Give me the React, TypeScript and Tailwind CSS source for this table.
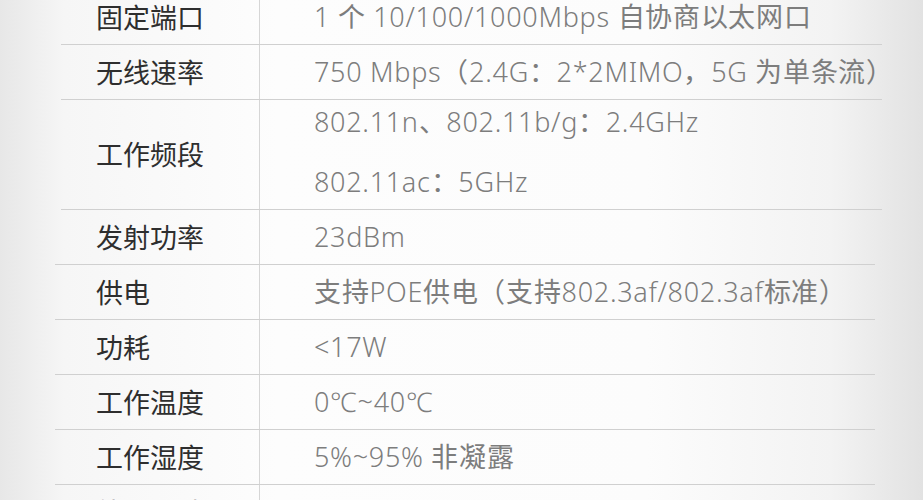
const specs: { label: string; values: string[]; left: number; right: number }[] = [
  { label: '固定端口', values: ['1 个 10/100/1000Mbps 自协商以太网口'], left: 61, right: 882 },
  { label: '无线速率', values: ['750 Mbps（2.4G：2*2MIMO，5G 为单条流）'], left: 61, right: 882 },
  { label: '工作频段', values: ['802.11n、802.11b/g：2.4GHz', '802.11ac：5GHz'], left: 61, right: 882 },
  { label: '发射功率', values: ['23dBm'], left: 55, right: 875 },
  { label: '供电', values: ['支持POE供电（支持802.3af/802.3af标准）'], left: 55, right: 875 },
  { label: '功耗', values: ['<17W'], left: 55, right: 875 },
  { label: '工作温度', values: ['0℃~40℃'], left: 55, right: 875 },
  { label: '工作湿度', values: ['5%~95% 非凝露'], left: 55, right: 875 },
  { label: '外形尺寸', values: [''], left: 55, right: 875 },
]

export default function App() {
  return (
    <div
      lang="zh-CN"
      className="w-[923px] h-[500px] overflow-hidden bg-[linear-gradient(to_right,#e7e7e7_0%,#f6f6f6_7%,#fdfdfd_30%,#fcfcfc_70%,#f3f3f3_90%,#e2e2e2_100%)]"
    >
      <div className="mt-[-10px]">
        {specs.map((s) => (
          <div
            key={s.label}
            className="flex border-b border-[#d0d0d0]"
            style={{ marginLeft: s.left, width: s.right - s.left, height: s.values.length * 55 }}
          >
            <div
              className="flex shrink-0 items-center border-r border-[#d6d6d6] text-[27px] text-[#2e2e2e] font-['Noto_Sans_CJK_SC',sans-serif]"
              style={{ width: 260 - s.left, paddingLeft: 96 - s.left }}
            >
              {s.label}
            </div>
            <div
              className={
                'flex min-w-0 flex-1 flex-col justify-center pl-[54px] text-[27px] leading-[60px] tracking-[0.7px] text-[#7d7d7d] font-[\'Open_Sans\',\'Noto_Sans_CJK_SC\',sans-serif] font-light ' +
                (s.values.length > 1 ? 'pb-[6px]' : '')
              }
            >
              {s.values.map((v, i) => (
                <div key={i} className="whitespace-nowrap">
                  {v}
                </div>
              ))}
            </div>
          </div>
        ))}
      </div>
    </div>
  )
}
